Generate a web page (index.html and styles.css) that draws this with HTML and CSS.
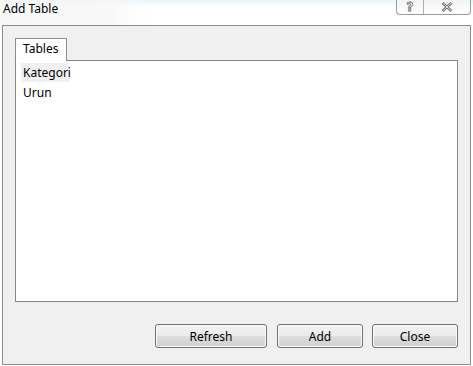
FILE: index.html
```html
<!DOCTYPE html>
<html>
<head>
<meta charset="utf-8">
<link rel="stylesheet" href="styles.css">
</head>
<body>
<div class="window">
  <div class="titlebar">
    <span class="title">Add Table</span>
    <div class="caption-btns">
      <span class="cap-btn help">?</span>
      <span class="cap-btn close">
        <svg width="14" height="10" viewBox="0 0 14 10"><path d="M2.5 1 L11.5 9 M11.5 1 L2.5 9" stroke="#6b6b6b" stroke-width="2.4" fill="none"/><path d="M2.5 1 L11.5 9 M11.5 1 L2.5 9" stroke="#ffffff" stroke-width="0.8" fill="none"/></svg>
      </span>
    </div>
  </div>
  <div class="dialog">
    <div class="tabs">
      <div class="tab">Tables</div>
    </div>
    <div class="panel">
      <div class="row selected">Kategori</div>
      <div class="row">Urun</div>
    </div>
    <div class="buttons">
      <button class="btn refresh">Refresh</button>
      <button class="btn add">Add</button>
      <button class="btn close-btn">Close</button>
    </div>
  </div>
</div>
</body>
</html>
```
FILE: styles.css
```css
* { box-sizing: border-box; }
html, body { margin: 0; padding: 0; }
body {
  width: 473px;
  height: 366px;
  background: #ffffff;
  font-family: "Segoe UI", "Noto Sans", "Open Sans", sans-serif;
  font-size: 12px;
  color: #000;
  overflow: hidden;
}
.window {
  width: 473px;
  height: 366px;
  background: linear-gradient(180deg, #e6f4fa 0px, #f6fbfd 4px, #ffffff 8px);
}
.titlebar {
  height: 25px;
  display: flex;
  justify-content: space-between;
  align-items: flex-start;
  background: linear-gradient(90deg, rgba(246,246,246,0.9) 0, rgba(247,247,247,0.8) 110px, rgba(250,250,250,0.4) 130px, rgba(255,255,255,0) 150px);
}
.title {
  padding-left: 3px;
  padding-top: 1px;
  line-height: 16px;
  font-size: 12px;
  color: #000;
}
.caption-btns {
  display: flex;
  margin-right: 2px;
  width: 75px;
  height: 15px;
  border: 1px solid #9a9a9a;
  border-top: none;
  border-radius: 0 0 4px 4px;
  background: linear-gradient(180deg, #f4f4f4, #ffffff);
}
.cap-btn {
  display: flex;
  align-items: center;
  justify-content: center;
  height: 14px;
  color: #555;
  font-size: 12px;
  line-height: 12px;
  font-weight: bold;
}
.cap-btn.help {
  width: 27px;
  border-right: 1px solid #b0b0b0;
  color: #fff;
  -webkit-text-stroke: 0.8px #6b6b6b;
  font-family: "DejaVu Sans", sans-serif;
  font-size: 12px;
}
.cap-btn.close { flex: 1; }
.dialog {
  margin: 0 2px 0 2px;
  height: 340px;
  border: 1px solid #8c8c8c;
  background: #f0f0f0;
  padding: 12px 12px 15px 12px;
  display: flex;
  flex-direction: column;
}
.tabs {
  display: flex;
  height: 22px;
  position: relative;
  z-index: 1;
}
.tab {
  width: 52px;
  height: 23px;
  border: 1px solid #898c95;
  border-bottom: none;
  background: #ffffff;
  padding-left: 7px;
  line-height: 20px;
}
.panel {
  height: 242px;
  border: 1px solid #828790;
  background: #ffffff;
  padding: 2px 0 0 5px;
}
.row {
  height: 20px;
  line-height: 19px;
  padding-left: 2px;
  width: 48px;
}
.row.selected {
  height: 19px;
  margin-bottom: 1px;
  background: #f0f0f0;
}
.buttons {
  display: flex;
  justify-content: flex-end;
  margin-top: 22px;
  gap: 10px;
}
.btn {
  height: 24px;
  font-family: inherit;
  font-size: 12px;
  color: #000;
  border: 1px solid #707070;
  border-radius: 3px;
  background: linear-gradient(180deg, #f2f2f2 0%, #ebebeb 48%, #dddddd 52%, #cfcfcf 100%);
  box-shadow: inset 0 0 0 1px #fcfcfc;
  padding: 0;
}
.btn.refresh { width: 112px; }
.btn.add { width: 86px; margin-right: -1px; }
.btn.close-btn { width: 86px; }
```
